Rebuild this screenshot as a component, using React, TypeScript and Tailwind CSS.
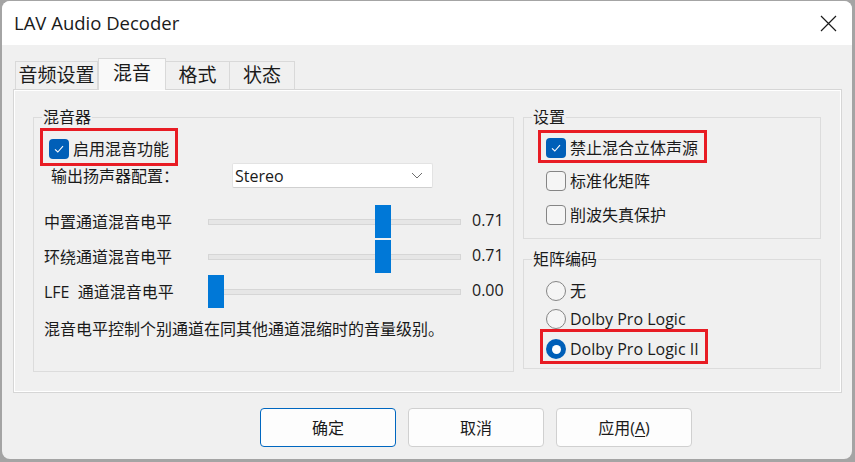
import type { ReactNode } from "react";

const font = "font-['Open_Sans','Noto_Sans_CJK_SC',sans-serif]";

function Check(props: { checked?: boolean }) {
  if (props.checked) {
    return (
      <span className="flex h-[20px] w-[20px] shrink-0 items-center justify-center rounded-[4px] bg-[#005fb8]">
        <svg width="12" height="12" viewBox="0 0 12 12" fill="none">
          <path d="M2 6.3 L4.8 9 L10 3.2" stroke="#fff" strokeWidth="1.1" />
        </svg>
      </span>
    );
  }
  return <span className="h-[20px] w-[20px] shrink-0 rounded-[4px] border border-[#858585] bg-[#f5f5f5]" />;
}

function Radio(props: { checked?: boolean }) {
  if (props.checked) {
    return (
      <span className="flex h-[20px] w-[20px] shrink-0 items-center justify-center rounded-full bg-[#005fb8]">
        <span className="h-[9px] w-[9px] rounded-full bg-white" />
      </span>
    );
  }
  return <span className="h-[20px] w-[20px] shrink-0 rounded-full border border-[#858585] bg-[#f5f5f5]" />;
}

function Group(props: { label: string; className: string; children: ReactNode }) {
  return (
    <div className={`relative border border-[#dcdcdc] ${props.className}`}>
      <span className="absolute left-[8px] top-[-12px] bg-[#f0f0f0] px-px text-[16px] leading-[22px]">
        {props.label}
      </span>
      {props.children}
    </div>
  );
}

function Mark(props: { className: string }) {
  return <div className={`pointer-events-none absolute border-[3px] border-[#e81c24] ${props.className}`} />;
}

function SliderRow(props: { label: ReactNode; pos: number; value: string }) {
  return (
    <div className="flex h-[33px] items-center pl-[10px]">
      <span className="w-[164px] text-[16px] leading-[22px]">{props.label}</span>
      <div className="relative h-[33px] w-[253px]">
        <div className="absolute left-0 right-0 top-[14px] h-[6px] border border-[#d6d6d6] bg-[#e6e6e6]" />
        <div className="absolute top-0 h-[33px] w-[16px] bg-[#0078d7]" style={{ left: props.pos }} />
      </div>
      <span className="ml-[11px] mb-[3px] text-[16px] leading-[22px]">{props.value}</span>
    </div>
  );
}

function Btn(props: { children: ReactNode; primary?: boolean }) {
  return (
    <button
      className={`flex h-[39px] w-[136px] items-center justify-center rounded-[4px] border bg-[#fdfdfd] text-[16px] ${
        props.primary ? "border-[#0067c0]" : "border-[#d0d0d0]"
      }`}
    >
      {props.children}
    </button>
  );
}

export default function App() {
  return (
    <div className={`h-[462px] w-[855px] bg-[#a4a4a4] pl-[2px] pt-px text-[#1a1a1a] ${font}`}>
      <div className="flex h-[458px] w-[850px] flex-col overflow-hidden rounded-[8px] bg-[#f0f0f0]">
        {/* title bar */}
        <div className="flex h-[44px] shrink-0 items-center justify-between bg-white pl-[12px] pr-[15px]">
          <span className="text-[18.5px] leading-none">LAV Audio Decoder</span>
          <svg width="17" height="17" viewBox="0 0 17 17" fill="none">
            <path d="M1 1 L16 16 M16 1 L1 16" stroke="#1a1a1a" strokeWidth="1.2" />
          </svg>
        </div>

        <div className="px-[11px] pt-[12px]">
          {/* tabs */}
          <div className="ml-[2px] flex h-[32px] items-end text-[19px]">
            <div className="flex h-[28px] w-[83px] items-center justify-center border border-b-0 border-[#d9d9d9]">
              音频设置
            </div>
            <div className="relative z-10 -mb-px flex h-[32px] w-[68px] items-center justify-center border border-b-0 border-[#d9d9d9] bg-[#f9f9f9] pb-[2px]">
              混音
            </div>
            <div className="flex h-[28px] w-[64px] items-center justify-center border border-b-0 border-l-0 border-[#d9d9d9]">
              格式
            </div>
            <div className="flex h-[28px] w-[65px] items-center justify-center border border-b-0 border-l-0 border-[#d9d9d9]">
              状态
            </div>
          </div>

          {/* tab page */}
          <div className="flex h-[304px] w-[829px] gap-[9px] border border-[#d6d6d6] pl-[19px] pt-[27px] shadow-[inset_0_0_0_1px_#ffffff]">
            <Group label="混音器" className="h-[255px] w-[481px]">
              <div className="ml-[15px] mt-[21px] flex items-center gap-[4px] text-[16px] leading-[20px]">
                <Check checked />
                启用混音功能
              </div>
              <div className="mt-[4px] flex h-[25px] items-center">
                <span className="ml-[17px] w-[181px] text-[16px]">输出扬声器配置：</span>
                <div className="flex h-[25px] w-[201px] items-center justify-between rounded-[2px] border border-[#e3e3e3] border-b-[#d0d0d0] bg-white pl-[2px] pr-[9px] text-[16px]">
                  Stereo
                  <svg width="12" height="7" viewBox="0 0 12 7" fill="none">
                    <path d="M1 1 L6 6 L11 1" stroke="#6d6d6d" strokeWidth="1" />
                  </svg>
                </div>
              </div>
              <div className="mt-[17px] flex flex-col gap-[2px]">
                <SliderRow label="中置通道混音电平" pos={167} value="0.71" />
                <SliderRow label="环绕通道混音电平" pos={167} value="0.71" />
                <SliderRow label={<>LFE&nbsp;&nbsp;通道混音电平</>} pos={0} value="0.00" />
              </div>
              <div className="ml-[10px] mt-[10px] text-[16px] leading-[22px]">
                混音电平控制个别通道在同其他通道混缩时的音量级别。
              </div>
              <Mark className="left-[6px] top-[10px] h-[38px] w-[138px]" />
            </Group>

            <div className="flex w-[298px] flex-col">
              <Group label="设置" className="h-[122px]">
                <div className="flex flex-col pl-[22px] pt-[20px] text-[16px] leading-[20px]">
                  <div className="flex items-center gap-[4px]">
                    <Check checked />
                    禁止混合立体声源
                  </div>
                  <div className="mt-[13px] flex items-center gap-[4px]">
                    <Check />
                    标准化矩阵
                  </div>
                  <div className="mt-[14px] flex items-center gap-[4px]">
                    <Check />
                    削波失真保护
                  </div>
                </div>
                <Mark className="left-[14px] top-[12px] h-[33px] w-[169px]" />
              </Group>

              <Group label="矩阵编码" className="mt-[20px] h-[110px]">
                <div className="flex flex-col pl-[22px] pt-[21px] text-[16px] leading-[20px]">
                  <div className="flex items-center gap-[4px]">
                    <Radio />
                    无
                  </div>
                  <div className="mt-[8px] flex items-center gap-[4px]">
                    <Radio />
                    Dolby Pro Logic
                  </div>
                  <div className="mt-[10px] flex items-center gap-[4px]">
                    <Radio checked />
                    Dolby Pro Logic II
                  </div>
                </div>
                <Mark className="left-[16px] top-[69px] h-[35px] w-[168px]" />
              </Group>
            </div>
          </div>
        </div>

        {/* buttons */}
        <div className="mt-[15px] flex gap-[12px] pl-[258px]">
          <Btn primary>确定</Btn>
          <Btn>取消</Btn>
          <Btn>
            应用(<span className="underline underline-offset-2">A</span>)
          </Btn>
        </div>
      </div>
    </div>
  );
}
